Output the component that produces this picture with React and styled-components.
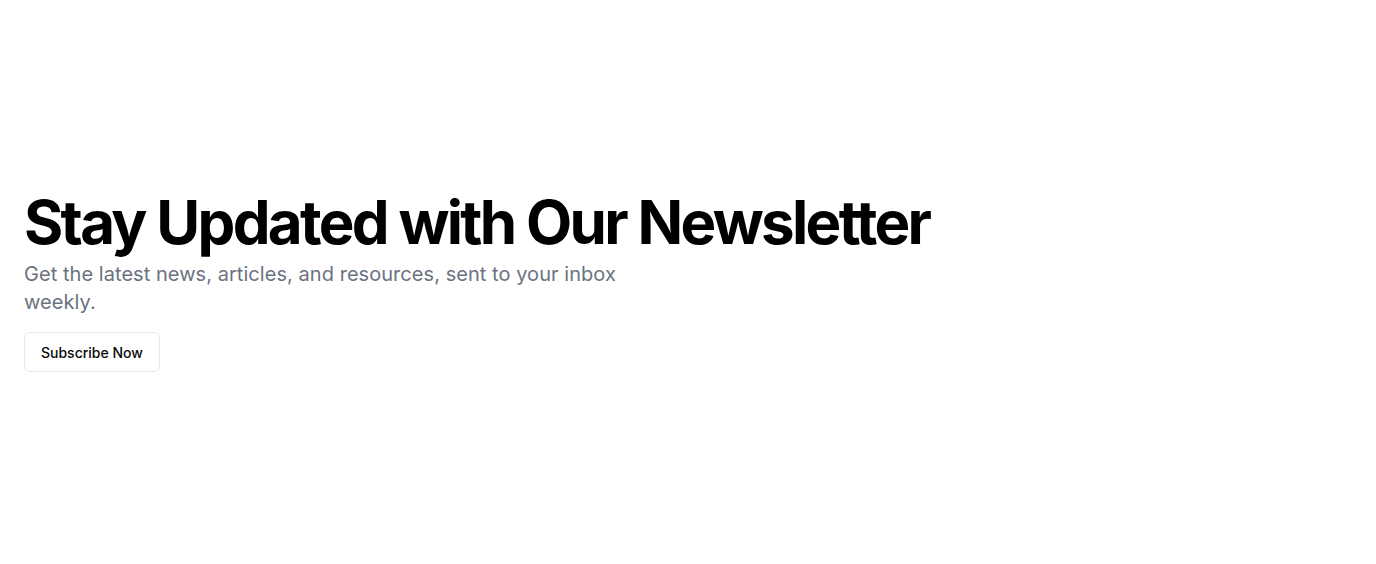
import React from "react";
import styled, { createGlobalStyle } from "styled-components";

const GlobalStyle = createGlobalStyle`
  * {
    box-sizing: border-box;
  }
  body {
    margin: 0;
    background: #ffffff;
    font-family: Inter, "Noto Sans", sans-serif;
  }
`;

const Section = styled.section`
  min-height: 564px;
  display: flex;
  align-items: center;
  padding: 0 24px;
`;

const Content = styled.div`
  display: flex;
  flex-direction: column;
  align-items: flex-start;
`;

const Title = styled.h1`
  margin: 0;
  font-size: 60px;
  line-height: 1;
  font-weight: 700;
  letter-spacing: -2.68px;
  color: #000000;
`;

const Lead = styled.p`
  margin: 8px 0 0;
  max-width: 600px;
  font-size: 20px;
  line-height: 28px;
  letter-spacing: 0.05px;
  color: #6b7280;
`;

const Button = styled.button`
  margin-top: 16px;
  height: 40px;
  padding: 0 16px;
  border: 1px solid #e5e7eb;
  border-radius: 6px;
  background: #ffffff;
  font-family: inherit;
  font-size: 14px;
  font-weight: 500;
  color: #09090b;
  cursor: pointer;
`;

const App = () => {
  return (
    <>
      <GlobalStyle />
      <Section>
        <Content>
          <Title>Stay Updated with Our Newsletter</Title>
          <Lead>
            Get the latest news, articles, and resources, sent to your inbox
            weekly.
          </Lead>
          <Button>Subscribe Now</Button>
        </Content>
      </Section>
    </>
  );
};

export default App;
